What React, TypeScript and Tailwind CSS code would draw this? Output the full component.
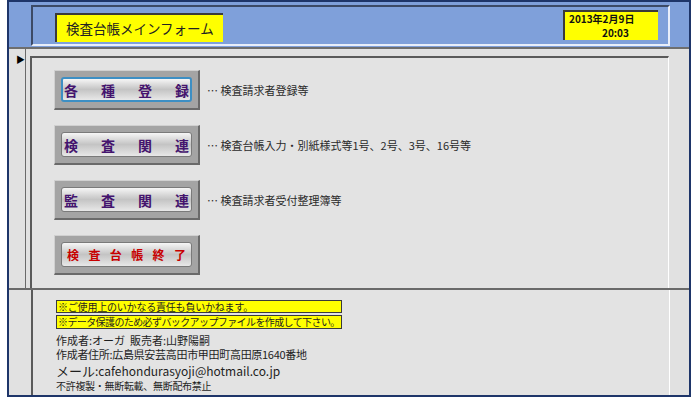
const jp = "font-['Noto_Sans_CJK_JP',sans-serif]";

const menu = [
  { chars: ['各', '種', '登', '録'], note: '… 検査請求者登録等', focus: true },
  { chars: ['検', '査', '関', '連'], note: '… 検査台帳入力・別紙様式等1号、2号、3号、16号等' },
  { chars: ['監', '査', '関', '連'], note: '… 検査請求者受付整理簿等' },
];

function MenuButton({ chars, focus, red }: { chars: string[]; focus?: boolean; red?: boolean }) {
  return (
    <div className="w-[146px] h-[40px] bg-[#a4a4a4] border-t border-l border-[#d0d0d0] border-r-2 border-b-2 border-r-[#6a6a6a] border-b-[#6a6a6a] px-[6px] py-[6px]">
      <div
        className={`h-full rounded-[3px] bg-gradient-to-b from-[#f6f6f6] via-[#c4c4c4] to-[#e8e8e8] flex items-center justify-between ${
          focus ? 'border-2 border-[#3d8fc4] px-[1px]' : 'border border-[#7a7a7a] px-[2px]'
        } ${red ? 'px-[5px]' : ''}`}
      >
        {chars.map((c, i) => (
          <span
            key={i}
            className={`font-bold leading-none ${red ? 'text-[12px] text-[#c80000]' : 'text-[14px] text-[#44146e]'}`}
          >
            {c}
          </span>
        ))}
      </div>
    </div>
  );
}

export default function App() {
  return (
    <div className={`w-[698px] h-[403px] bg-white ${jp}`}>
      <div className="ml-[7px] w-[684px] h-[397px] border-2 border-[#1e3569] flex flex-col bg-[#e1e1e1]">
        {/* header */}
        <div className="h-[47px] bg-[#7fa0da] pl-[22px] pt-[3px] border-b-2 border-[#6e6e6e] shrink-0">
          <div className="w-[639px] h-[41px] border-t-2 border-l-2 border-[#3c4a66] border-b-2 border-r-2 border-b-[#e8eefa] border-r-[#e8eefa] flex items-start justify-between pl-[22px] pr-[10px]">
            <div className="mt-[6px] w-[168px] h-[29px] bg-[#ffff00] border-t-2 border-l-2 border-[#3a3a3a] flex items-center pl-[9px] text-[13.5px] text-[#222]">
              検査台帳メインフォーム
            </div>
            <div className="mt-[3px] w-[95px] h-[30px] bg-[#ffff00] border-t-2 border-l-2 border-[#3a3a3a] pl-[4px] text-[10px] font-bold leading-[14px] text-[#111]">
              <div>2013年2月9日</div>
              <div className="pl-[33px]">20:03</div>
            </div>
          </div>
        </div>

        {/* detail */}
        <div className="flex h-[241px] shrink-0 border-b-2 border-[#6a6a6a]">
          <div className="w-[17px] border-r border-[#6a6a6a] pt-[6px] pl-[7px] text-[9px] leading-none text-black">▶</div>
          <div className="w-[4px]" />
          <div className="mt-[7px] w-[639px] border-t-2 border-l-2 border-[#5a5a5a] border-r border-r-white bg-[#e3e3e3] pl-[22px] pt-[12px] flex flex-col gap-[15px]">
            {menu.map((m, i) => (
              <div key={i} className="flex items-center gap-[7px]">
                <MenuButton chars={m.chars} focus={m.focus} />
                <span className="text-[11px] text-[#2a2a2a]">{m.note}</span>
              </div>
            ))}
            <MenuButton chars={['検', '査', '台', '帳', '終', '了']} red />
          </div>
        </div>

        {/* footer */}
        <div className="flex flex-1">
          <div className="w-[22px]" />
          <div className="w-[639px] border-l-2 border-[#5a5a5a] border-r border-r-white bg-[#e3e3e3] pl-[23px] pt-[10px] text-[#1e1e1e]">
            <div className="w-[286px] h-[13px] bg-[#ffff00] border border-[#3a3a3a] text-[10px] leading-[11px] pl-[1px] tracking-[-0.2px]">
              ※ご使用上のいかなる責任も負いかねます。
            </div>
            <div className="w-[286px] h-[14px] mt-[2px] bg-[#ffff00] border border-[#3a3a3a] text-[10px] leading-[12px] pl-[1px] tracking-[-0.6px] whitespace-nowrap overflow-hidden">
              ※データ保護のため必ずバックアップファイルを作成して下さい。
            </div>
            <div className="mt-[4px] text-[11px] leading-[14px]">作成者:オーガ&nbsp;&nbsp;販売者:山野陽嗣</div>
            <div className="text-[11px] leading-[14px] tracking-[-0.3px]">作成者住所:広島県安芸高田市甲田町高田原1640番地</div>
            <div className="leading-[16px]">
              <span className="text-[13px]">メール</span>
              <span className="text-[12px]">:cafehondurasyoji@hotmail.co.jp</span>
            </div>
            <div className="text-[10px] leading-[13px] tracking-[-0.3px]">不許複製・無断転載、無断配布禁止</div>
          </div>
        </div>
      </div>
    </div>
  );
}
